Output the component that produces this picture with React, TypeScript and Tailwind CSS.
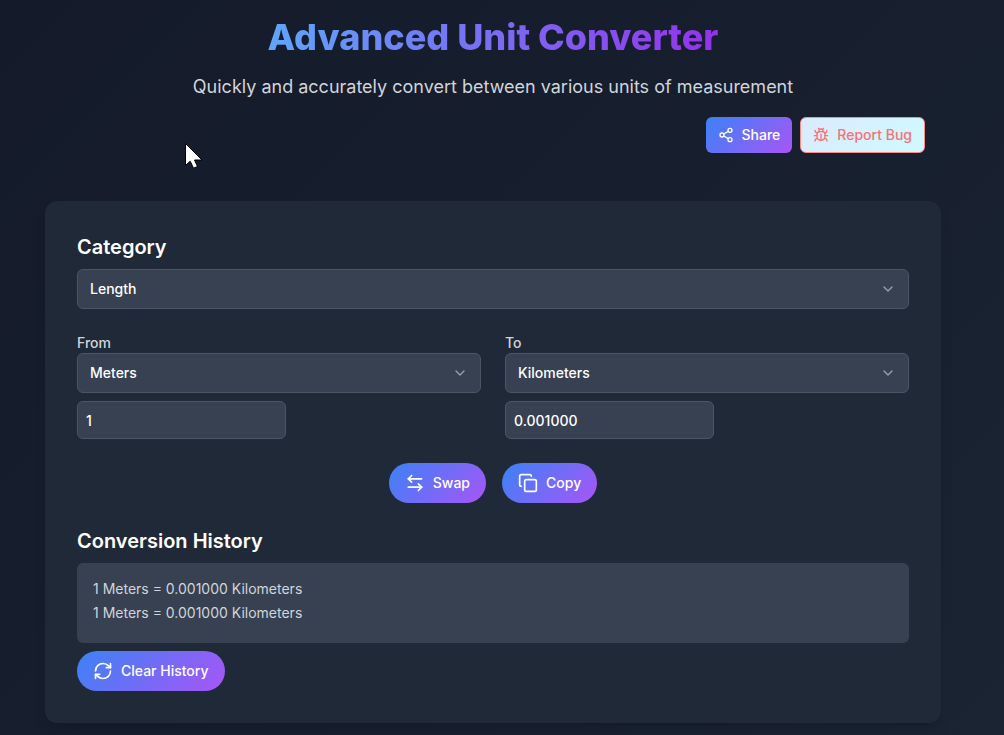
import { useState } from "react";
import { ArrowLeftRight, Bug, ChevronDown, Copy, RefreshCw, Share2 } from "lucide-react";

const lengthUnits: Record<string, number> = {
  Meters: 1,
  Kilometers: 1000,
  Centimeters: 0.01,
  Miles: 1609.344,
  Feet: 0.3048,
};

const brandFill = "bg-[linear-gradient(135deg,#3b82f6,#a855f7)] text-white";
const pill = `inline-flex h-10 items-center gap-2 rounded-full px-4 text-sm font-medium ${brandFill}`;
const field =
  "rounded-md border border-[#4b5563] bg-[#374151] text-sm font-medium text-white";

type PickerProps = {
  id: string;
  value: string;
  options: string[];
  onChange: (value: string) => void;
};

function Picker({ id, value, options, onChange }: PickerProps) {
  return (
    <div className="grid items-center">
      <select
        id={id}
        value={value}
        onChange={(e) => onChange(e.target.value)}
        className={`${field} col-start-1 row-start-1 h-10 w-full appearance-none px-3`}
      >
        {options.map((o) => (
          <option key={o}>{o}</option>
        ))}
      </select>
      <ChevronDown className="pointer-events-none col-start-1 row-start-1 mr-[13px] size-4 justify-self-end text-white opacity-50" />
    </div>
  );
}

export default function App() {
  const [category, setCategory] = useState("Length");
  const [from, setFrom] = useState("Meters");
  const [to, setTo] = useState("Kilometers");
  const [amount, setAmount] = useState("1");
  const [history, setHistory] = useState([
    "1 Meters = 0.001000 Kilometers",
    "1 Meters = 0.001000 Kilometers",
  ]);
  const units = Object.keys(lengthUnits);
  const result = ((Number(amount) * lengthUnits[from]) / lengthUnits[to]).toFixed(6);

  const swap = () => {
    setFrom(to);
    setTo(from);
  };

  return (
    <div className="min-h-screen bg-[linear-gradient(135deg,#141a29,#1a2433)] pt-4 pr-[18px] pb-3 font-['Inter',sans-serif] text-white">
      <div className="mx-auto max-w-4xl">
        <header className="px-4 text-center">
          <h1 className="mx-auto w-fit bg-[linear-gradient(to_right,#60a5fa,#9333ea)] bg-clip-text text-4xl leading-[42px] font-extrabold text-transparent">
            Advanced Unit Converter
          </h1>
          <p className="mt-[15px] text-lg leading-7 text-[#d1d5db]">
            Quickly and accurately convert between various units of measurement
          </p>
          <div className="mt-4 flex justify-end gap-2">
            <button
              className={`inline-flex h-9 items-center gap-2 rounded-md px-3 text-sm font-medium ${brandFill}`}
            >
              <Share2 className="size-4" />
              Share
            </button>
            <button className="inline-flex h-9 items-center gap-2 rounded-md border border-[#f98b8b] bg-[linear-gradient(135deg,#dbeafe,#cffafe)] px-3 text-sm font-medium text-[#f87171]">
              <Bug className="size-4" />
              Report Bug
            </button>
          </div>
        </header>

        <main className="mt-12 rounded-xl bg-[#1f2937] p-8 shadow-lg">
          <label htmlFor="category" className="mb-2 block text-xl leading-7 font-semibold">
            Category
          </label>
          <Picker id="category" value={category} options={["Length"]} onChange={setCategory} />

          <div className="mt-6 grid grid-cols-2 gap-6">
            <div>
              <label htmlFor="from" className="block text-sm font-medium text-[#d1d5db]">
                From
              </label>
              <Picker id="from" value={from} options={units} onChange={setFrom} />
              <input
                aria-label="Amount"
                value={amount}
                onChange={(e) => setAmount(e.target.value)}
                className={`${field} mt-2 block h-[38px] w-[209px] px-2`}
              />
            </div>
            <div>
              <label htmlFor="to" className="block text-sm font-medium text-[#d1d5db]">
                To
              </label>
              <Picker id="to" value={to} options={units} onChange={setTo} />
              <input
                aria-label="Result"
                readOnly
                value={result}
                className={`${field} mt-2 block h-[38px] w-[209px] px-2`}
              />
            </div>
          </div>

          <div className="mt-6 flex justify-center gap-4">
            <button className={pill} onClick={swap}>
              <ArrowLeftRight className="size-5" />
              Swap
            </button>
            <button className={pill} onClick={() => navigator.clipboard?.writeText(result)}>
              <Copy className="size-5" />
              Copy
            </button>
          </div>

          <h2 className="mt-6 text-xl leading-7 font-semibold">Conversion History</h2>
          <ul className="mt-2 rounded-md bg-[#374151] px-4 pt-3.5 pb-[18px] text-sm leading-6 text-[#d1d5db]">
            {history.map((line, i) => (
              <li key={i}>{line}</li>
            ))}
          </ul>
          <button className={`${pill} mt-2`} onClick={() => setHistory([])}>
            <RefreshCw className="size-5" />
            Clear History
          </button>
        </main>
      </div>
      <svg
        aria-hidden="true"
        viewBox="0 0 18 26"
        className="pointer-events-none absolute top-[143px] left-[185px] h-[26px] w-[18px]"
      >
        <path
          d="M.5 .5v22l4.700-4.300 3.300 7 4-1.700-3-6.500h7.500z"
          fill="#fff"
          stroke="#000"
          strokeWidth="1"
        />
      </svg>
    </div>
  );
}
